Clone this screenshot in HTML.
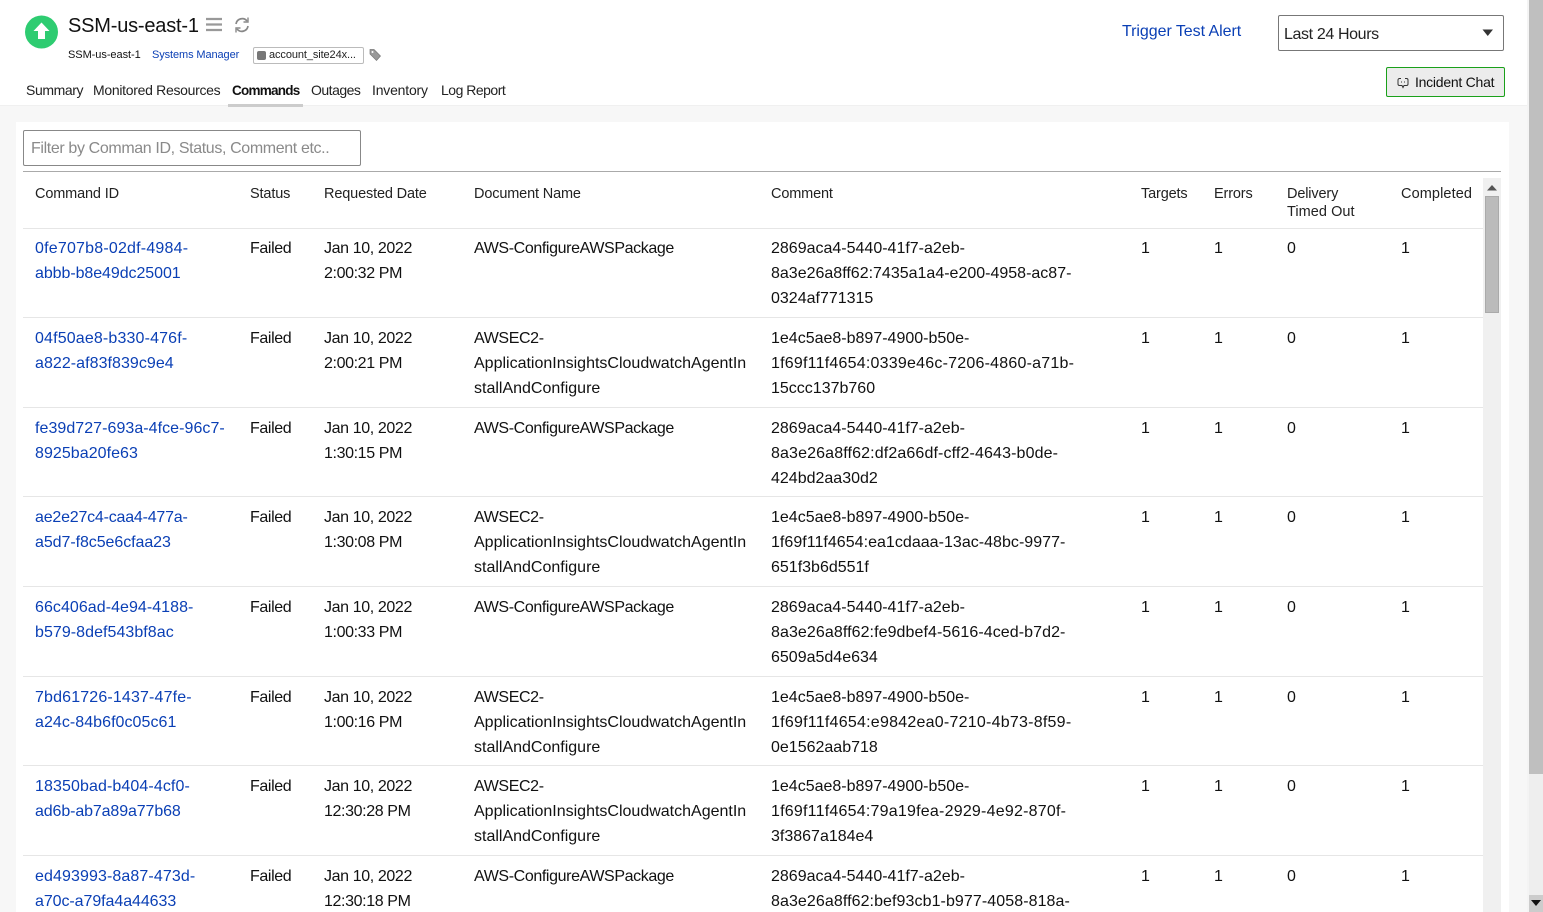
<!DOCTYPE html>
<html><head><meta charset="utf-8"><style>
html,body{margin:0;padding:0;width:1543px;height:912px;overflow:hidden;background:#fff}
body{position:relative;font-family:"Liberation Sans",sans-serif;color:#111;font-size:16px;letter-spacing:0}
.a{position:absolute;white-space:nowrap}
.r{position:absolute;left:0;width:1483px;height:0}
.c{position:absolute;top:0;line-height:25px;white-space:nowrap}
.l{color:#0a3fb5}
.c.l{letter-spacing:.05px}
.d{letter-spacing:-.38px}
.x{letter-spacing:-.38px}
.h{line-height:18px;font-size:14.5px;color:#222;letter-spacing:-.15px}
.hl{position:absolute;left:23px;width:1460px;height:1px;background:#e6e6e6}
.t{font-size:14px;color:#222;top:81px;line-height:18px;letter-spacing:-.33px}
</style></head><body>
<div class="a" style="left:0;top:105px;width:1527px;height:807px;background:#f7f7f7;border-top:1px solid #f0f0f0;box-sizing:border-box"></div>
<div class="a" style="left:16px;top:122px;width:1493px;height:790px;background:#fff"></div>
<div class="a" style="left:1527px;top:0;width:2px;height:912px;background:#f4f4f4"></div>
<div class="a" style="left:1529px;top:0;width:14px;height:912px;background:#eee"></div>
<div class="a" style="left:1529px;top:0;width:14px;height:774px;background:#bfbfbf"></div>
<div class="a" style="left:1529px;top:895px;width:14px;height:17px;background:#ccc"></div>
<svg class="a" style="left:1530px;top:898px" width="12" height="10"><path d="M1 2h10L6 8z" fill="#111"/></svg>

<svg class="a" style="left:24px;top:14px" width="36" height="36" viewBox="0 0 36 36"><circle cx="17.500" cy="18" r="16.500" fill="#2ecc71"/><path d="M17.500 8.500L25.500 17H21v8h-7v-8H9.500z" fill="#fff"/></svg>
<div class="a" style="left:68px;top:13px;font-size:20px;line-height:26px;letter-spacing:-.2px;color:#111">SSM-us-east-1</div>
<svg class="a" style="left:205px;top:17px" width="18" height="15"><path d="M1 2h16M1 7.500h16M1 13h16" stroke="#999" stroke-width="2.200"/></svg>
<svg class="a" style="left:233px;top:16px" width="18" height="18" viewBox="0 0 18 18" fill="none" stroke="#888" stroke-width="1.700"><path d="M3 8A6.200 6.200 0 0 1 14 5"/><path d="M15 10A6.200 6.200 0 0 1 4 13"/><path d="M15 1.500V6h-4.500" stroke-width="1.400"/><path d="M3 16.500V12h4.500" stroke-width="1.400"/></svg>
<div class="a" style="left:68px;top:47px;font-size:11px;line-height:16px;letter-spacing:-.05px;color:#111">SSM-us-east-1</div>
<div class="a l" style="left:152px;top:47px;font-size:11px;line-height:16px;letter-spacing:-.1px">Systems Manager</div>
<div class="a" style="left:253px;top:47px;width:111px;height:17px;border:1px solid #bbb;border-radius:2px;box-sizing:border-box"></div>
<div class="a" style="left:257px;top:51px;width:9px;height:9px;background:#777;border-radius:2px"></div>
<div class="a" style="left:269px;top:47px;font-size:11px;line-height:16px;letter-spacing:-.1px;color:#222">account_site24x...</div>
<svg class="a" style="left:369px;top:48px" width="13" height="14" viewBox="0 0 13 14"><path d="M1 1.500h4l6.500 6.500-4 4.500L1 6z" fill="#999" stroke="#777" stroke-width=".7"/><circle cx="3.500" cy="4" r="1" fill="#fff"/></svg>

<div class="a t" style="left:26px;letter-spacing:-.4px">Summary</div>
<div class="a t" style="left:93px;letter-spacing:-.3px">Monitored Resources</div>
<div class="a t" style="left:232px;top:82px;font-size:13.500px;font-weight:bold;letter-spacing:-.75px;color:#111">Commands</div>
<div class="a t" style="left:311px;letter-spacing:-.5px">Outages</div>
<div class="a t" style="left:372px;letter-spacing:-.2px">Inventory</div>
<div class="a t" style="left:441px;letter-spacing:-.5px">Log Report</div>
<div class="a" style="left:228px;top:104px;width:75px;height:3px;background:#ccc"></div>

<div class="a l" style="left:1122px;top:22px;font-size:16px;line-height:20px;letter-spacing:-.05px">Trigger Test Alert</div>
<div class="a" style="left:1278px;top:15px;width:226px;height:36px;border:1px solid #777;border-radius:2px;box-sizing:border-box"></div>
<div class="a" style="left:1284px;top:25px;font-size:16px;line-height:20px;letter-spacing:-.37px;color:#222">Last 24 Hours</div>
<svg class="a" style="left:1482px;top:29px" width="12" height="8"><path d="M.5 .5h10.500L5.750 7z" fill="#333"/></svg>
<div class="a" style="left:1386px;top:67px;width:119px;height:30px;border:1px solid #1aa01a;border-radius:2px;background:#ececec;box-sizing:border-box"></div>
<svg class="a" style="left:1397px;top:77px" width="12" height="13" viewBox="0 0 12 13" fill="none" stroke="#333" stroke-width="1"><path d="M4 1.500H2.500A1.500 1.500 0 0 0 1 3v4a1.500 1.500 0 0 0 1.500 1.500H5L6 10.500 7 8.500h2.500A1.500 1.500 0 0 0 11 7V3A1.500 1.500 0 0 0 9.500 1.500H8"/><path d="M4 5h1M7 5h1"/></svg>
<div class="a" style="left:1415px;top:73px;font-size:14px;line-height:18px;letter-spacing:-.25px;color:#111">Incident Chat</div>

<div class="a" style="left:23px;top:130px;width:338px;height:36px;border:1px solid #888;border-radius:2px;box-sizing:border-box"></div>
<div class="a" style="left:31px;top:139px;font-size:16px;line-height:20px;letter-spacing:-.37px;color:#8a8a8a">Filter by Comman ID, Status, Comment etc..</div>

<div class="a" style="left:23px;top:171px;width:1478px;height:1px;background:#aaa"></div>
<div class="a" style="left:1483px;top:178px;width:18px;height:734px;background:#f0f0f0"></div>
<svg class="a" style="left:1486px;top:184px" width="12" height="8"><path d="M1 6.500h10L6 1z" fill="#555"/></svg>
<div class="a" style="left:1485px;top:196px;width:14px;height:117px;background:#bbb;border:1px solid #aaa;box-sizing:border-box"></div>

<div class="r" style="top:185px">
<div class="c h" style="left:35px">Command ID</div><div class="c h" style="left:250px">Status</div><div class="c h" style="left:324px">Requested Date</div><div class="c h" style="left:474px">Document Name</div><div class="c h" style="left:771px">Comment</div><div class="c h" style="left:1141px">Targets</div><div class="c h" style="left:1214px">Errors</div><div class="c h" style="left:1287px">Delivery<br><span style="letter-spacing:.05px">Timed Out</span></div><div class="c h" style="left:1401px;letter-spacing:.1px">Completed</div>
</div>

<div class="hl" style="top:228px"></div><div class="hl" style="top:317px"></div><div class="hl" style="top:407px"></div><div class="hl" style="top:496px"></div><div class="hl" style="top:586px"></div><div class="hl" style="top:676px"></div><div class="hl" style="top:765px"></div><div class="hl" style="top:855px"></div>

<div class="r" style="top:236px"><div class="c l" style="left:35px"><span style="letter-spacing:.2px">0fe707b8-02df-4984-</span><br><span style="letter-spacing:-.07px">abbb-b8e49dc25001</span></div><div class="c d" style="left:250px">Failed</div><div class="c d" style="left:324px">Jan 10, 2022<br>2:00:32 PM</div><div class="c x" style="left:474px">AWS-ConfigureAWSPackage</div><div class="c" style="left:771px">2869aca4-5440-41f7-a2eb-<br>8a3e26a8ff62:7435a1a4-e200-4958-ac87-<br>0324af771315</div><div class="c" style="left:1141px">1</div><div class="c" style="left:1214px">1</div><div class="c" style="left:1287px">0</div><div class="c" style="left:1401px">1</div></div>

<div class="r" style="top:326px"><div class="c l" style="left:35px"><span style="letter-spacing:.15px">04f50ae8-b330-476f-</span><br>a822-af83f839c9e4</div><div class="c d" style="left:250px">Failed</div><div class="c d" style="left:324px">Jan 10, 2022<br>2:00:21 PM</div><div class="c" style="left:474px"><span class="x">AWSEC2-</span><br>ApplicationInsightsCloudwatchAgentIn<br>stallAndConfigure</div><div class="c" style="left:771px">1e4c5ae8-b897-4900-b50e-<br><span style="letter-spacing:.22px">1f69f11f4654:0339e46c-7206-4860-a71b-</span><br>15ccc137b760</div><div class="c" style="left:1141px">1</div><div class="c" style="left:1214px">1</div><div class="c" style="left:1287px">0</div><div class="c" style="left:1401px">1</div></div>

<div class="r" style="top:416px"><div class="c l" style="left:35px">fe39d727-693a-4fce-96c7-<br>8925ba20fe63</div><div class="c d" style="left:250px">Failed</div><div class="c d" style="left:324px">Jan 10, 2022<br>1:30:15 PM</div><div class="c x" style="left:474px">AWS-ConfigureAWSPackage</div><div class="c" style="left:771px">2869aca4-5440-41f7-a2eb-<br><span style="letter-spacing:.13px">8a3e26a8ff62:df2a66df-cff2-4643-b0de-</span><br>424bd2aa30d2</div><div class="c" style="left:1141px">1</div><div class="c" style="left:1214px">1</div><div class="c" style="left:1287px">0</div><div class="c" style="left:1401px">1</div></div>

<div class="r" style="top:505px"><div class="c l" style="left:35px"><span style="letter-spacing:-.21px">ae2e27c4-caa4-477a-</span><br><span style="letter-spacing:-.07px">a5d7-f8c5e6cfaa23</span></div><div class="c d" style="left:250px">Failed</div><div class="c d" style="left:324px">Jan 10, 2022<br>1:30:08 PM</div><div class="c" style="left:474px"><span class="x">AWSEC2-</span><br>ApplicationInsightsCloudwatchAgentIn<br>stallAndConfigure</div><div class="c" style="left:771px">1e4c5ae8-b897-4900-b50e-<br><span style="letter-spacing:.03px">1f69f11f4654:ea1cdaaa-13ac-48bc-9977-</span><br>651f3b6d551f</div><div class="c" style="left:1141px">1</div><div class="c" style="left:1214px">1</div><div class="c" style="left:1287px">0</div><div class="c" style="left:1401px">1</div></div>

<div class="r" style="top:595px"><div class="c l" style="left:35px">66c406ad-4e94-4188-<br>b579-8def543bf8ac</div><div class="c d" style="left:250px">Failed</div><div class="c d" style="left:324px">Jan 10, 2022<br>1:00:33 PM</div><div class="c x" style="left:474px">AWS-ConfigureAWSPackage</div><div class="c" style="left:771px">2869aca4-5440-41f7-a2eb-<br><span style="letter-spacing:.08px">8a3e26a8ff62:fe9dbef4-5616-4ced-b7d2-</span><br>6509a5d4e634</div><div class="c" style="left:1141px">1</div><div class="c" style="left:1214px">1</div><div class="c" style="left:1287px">0</div><div class="c" style="left:1401px">1</div></div>

<div class="r" style="top:685px"><div class="c l" style="left:35px"><span style="letter-spacing:.15px">7bd61726-1437-47fe-</span><br>a24c-84b6f0c05c61</div><div class="c d" style="left:250px">Failed</div><div class="c d" style="left:324px">Jan 10, 2022<br>1:00:16 PM</div><div class="c" style="left:474px"><span class="x">AWSEC2-</span><br>ApplicationInsightsCloudwatchAgentIn<br>stallAndConfigure</div><div class="c" style="left:771px">1e4c5ae8-b897-4900-b50e-<br><span style="letter-spacing:.24px">1f69f11f4654:e9842ea0-7210-4b73-8f59-</span><br>0e1562aab718</div><div class="c" style="left:1141px">1</div><div class="c" style="left:1214px">1</div><div class="c" style="left:1287px">0</div><div class="c" style="left:1401px">1</div></div>

<div class="r" style="top:774px"><div class="c l" style="left:35px"><span style="letter-spacing:.1px">18350bad-b404-4cf0-</span><br><span style="letter-spacing:-.12px">ad6b-ab7a89a77b68</span></div><div class="c d" style="left:250px">Failed</div><div class="c d" style="left:324px">Jan 10, 2022<br>12:30:28 PM</div><div class="c" style="left:474px"><span class="x">AWSEC2-</span><br>ApplicationInsightsCloudwatchAgentIn<br>stallAndConfigure</div><div class="c" style="left:771px">1e4c5ae8-b897-4900-b50e-<br><span style="letter-spacing:.22px">1f69f11f4654:79a19fea-2929-4e92-870f-</span><br>3f3867a184e4</div><div class="c" style="left:1141px">1</div><div class="c" style="left:1214px">1</div><div class="c" style="left:1287px">0</div><div class="c" style="left:1401px">1</div></div>

<div class="r" style="top:864px"><div class="c l" style="left:35px"><span style="letter-spacing:.1px">ed493993-8a87-473d-</span><br><span style="letter-spacing:-.07px">a70c-a79fa4a44633</span></div><div class="c d" style="left:250px">Failed</div><div class="c d" style="left:324px">Jan 10, 2022<br>12:30:18 PM</div><div class="c x" style="left:474px">AWS-ConfigureAWSPackage</div><div class="c" style="left:771px">2869aca4-5440-41f7-a2eb-<br><span style="letter-spacing:.08px">8a3e26a8ff62:bef93cb1-b977-4058-818a-</span></div><div class="c" style="left:1141px">1</div><div class="c" style="left:1214px">1</div><div class="c" style="left:1287px">0</div><div class="c" style="left:1401px">1</div></div>
</body></html>
